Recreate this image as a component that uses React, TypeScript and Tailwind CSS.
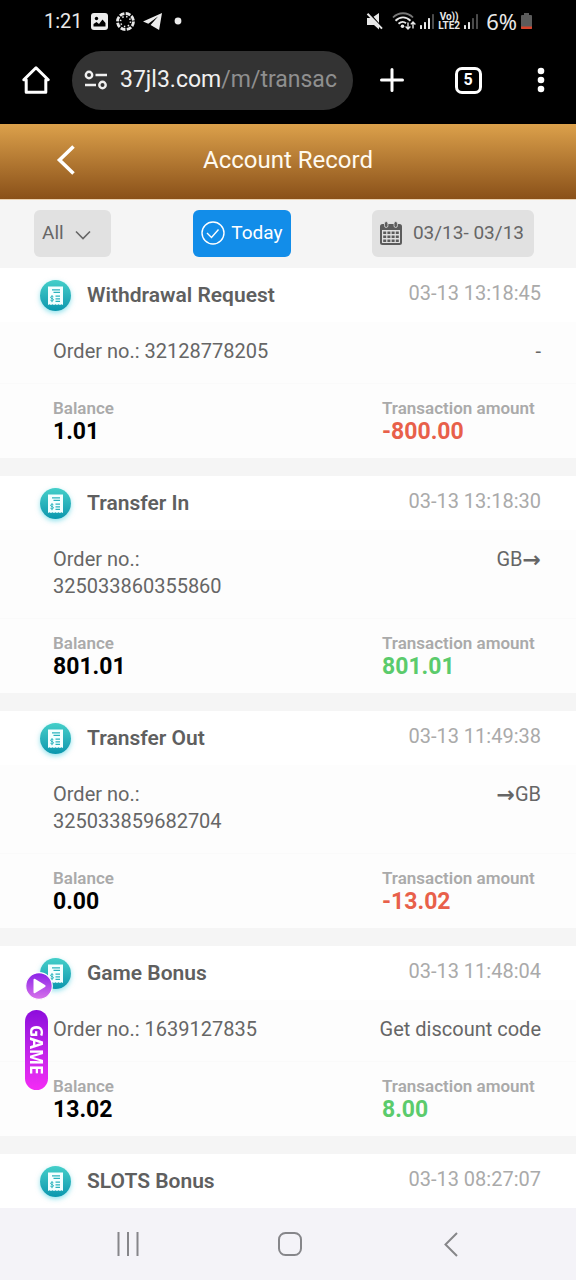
import { useState } from 'react';

interface AccountRecord {
  id: string;
  title: string;
  time: string;
  orderNo: string;
  note: string;
  direction?: 'in' | 'out';
  balance: string;
  amount: string;
}

const records: AccountRecord[] = [
  { id: '1', title: 'Withdrawal Request', time: '03-13 13:18:45', orderNo: '32128778205', note: '-', balance: '1.01', amount: '-800.00' },
  { id: '2', title: 'Transfer In', time: '03-13 13:18:30', orderNo: '325033860355860', note: 'GB', direction: 'in', balance: '801.01', amount: '801.01' },
  { id: '3', title: 'Transfer Out', time: '03-13 11:49:38', orderNo: '325033859682704', note: 'GB', direction: 'out', balance: '0.00', amount: '-13.02' },
  { id: '4', title: 'Game Bonus', time: '03-13 11:48:04', orderNo: '1639127835', note: 'Get discount code', balance: '13.02', amount: '8.00' },
];

const SignalBars = ({ level }: { level: number }) => (
  <svg width="14" height="16" viewBox="0 0 14 16" aria-hidden="true">
    {[4, 7, 11, 15].map((h, i) => (
      <rect key={h} x={i * 4} y={16 - h} width="2" height={h} rx="0.6" fill={i < level ? '#e8e8e8' : '#4a4a4a'} />
    ))}
  </svg>
);

const StatusBar = () => (
  <div className="flex h-[42px] items-center justify-between px-11 text-[#e8e8e8]">
    <div className="flex items-center gap-2">
      <span className="text-xl leading-6">1:21</span>
      <svg width="17" height="17" viewBox="0 0 17 17" aria-hidden="true">
        <rect width="17" height="17" rx="3" fill="#ececec" />
        <circle cx="5.5" cy="5.5" r="1.7" fill="#000" />
        <path d="M2.5 13.5V11l3-2 2.5 2 3.5-4.5 3 3.5v3.5z" fill="#000" />
      </svg>
      <svg width="19" height="19" viewBox="0 0 19 19" fill="none" stroke="#e8e8e8" aria-hidden="true">
        <circle cx="9.5" cy="9.5" r="8" strokeWidth="2.8" strokeDasharray="4.9 1.38" />
        <circle cx="9.5" cy="9.5" r="5" strokeWidth="1.6" strokeDasharray="1.4 2.53" />
      </svg>
      <svg width="19" height="17" viewBox="0 0 19 17" aria-hidden="true">
        <path d="M19 0 0 8.6l5.3 2.2L15 3.6 7.6 11.9l8.5 5z" fill="#ececec" />
      </svg>
      <svg className="ml-1" width="8" height="8" viewBox="0 0 8 8" aria-hidden="true">
        <circle cx="4" cy="4" r="3.4" fill="#ececec" />
      </svg>
    </div>
    <div className="flex items-center gap-1">
      <svg width="18" height="17" viewBox="0 0 18 17" aria-hidden="true">
        <path d="M1 5h5l7 7v4.500l-5-4.500H1zM7.500 3.800 13 0v10z" fill="#e8e8e8" />
        <path d="M1.5 0.8 16 15.6" stroke="#e8e8e8" strokeWidth="2" />
      </svg>
      <svg className="ml-1" width="24" height="18" viewBox="0 0 24 18" fill="none" aria-hidden="true">
        <path d="M1 5.5c5.5-5.7 14.5-5.7 20 0" stroke="#777" strokeWidth="1.8" />
        <path d="M3.5 8.7c4.5-4.4 10.5-4.4 15 0M6.5 11.8c2.8-2.5 5.2-2.5 7.5-.6" stroke="#e8e8e8" strokeWidth="1.9" />
        <circle cx="10.5" cy="14.2" r="1.8" fill="#e8e8e8" />
        <path d="M16 10.5V17M13.6 14.6 16 17l2.4-2.4M21 16.5V10M18.8 12.4 21 10l2.4 2.4" stroke="#e8e8e8" strokeWidth="1.4" />
      </svg>
      <SignalBars level={3} />
      <span className="flex w-[22px] flex-col items-center text-[10px] font-bold leading-[9px]">
        <span>Vo))</span>
        <span>LTE2</span>
      </span>
      <SignalBars level={2} />
      <span className="ml-1 font-['Noto_Sans'] text-[22px] leading-6">6%</span>
      <svg width="11" height="16" viewBox="0 0 11 16" aria-hidden="true">
        <path d="M3 0h5v2h2q1 0 1 1v12q0 1-1 1H1q-1 0-1-1V3q0-1 1-1h2z" fill="#5b5b5b" />
        <path d="M0 13.5h11V15q0 1-1 1H1q-1 0-1-1z" fill="#d8432b" />
      </svg>
    </div>
  </div>
);

const BrowserBar = () => (
  <div className="flex h-[76px] items-center">
    <button aria-label="Home" className="flex w-[72px] justify-center">
      <svg width="28" height="28" viewBox="0 0 28 28" fill="none" stroke="#fff" strokeWidth="3" strokeLinejoin="round" strokeLinecap="round">
        <path d="M1.8 13.8 14 1.8l12.2 12H23.8V26.3H4.2V13.8z" />
      </svg>
    </button>
    <button className="flex h-[59px] min-w-0 flex-1 items-center gap-3 rounded-full bg-[#333] px-3 text-left">
      <svg className="shrink-0" width="24" height="20" viewBox="0 0 24 20" fill="none" stroke="#f0f0f0" strokeWidth="2.4" aria-hidden="true">
        <circle cx="5" cy="5" r="3.2" />
        <path d="M11.5 5H23M1 15h11" />
        <circle cx="18.5" cy="15" r="3.2" />
      </svg>
      <span className="whitespace-nowrap text-[23px] leading-8 text-[#8f8f8f]">
        <span className="text-[#f0f0f0]">37jl3.com</span>/m/transac
      </span>
    </button>
    <button aria-label="New tab" className="flex w-[78px] justify-center">
      <svg width="24" height="24" viewBox="0 0 24 24" stroke="#fff" strokeWidth="3" strokeLinecap="round">
        <path d="M12 1.5v21M1.5 12h21" />
      </svg>
    </button>
    <button aria-label="Tabs" className="flex w-[74px] justify-center">
      <span className="flex h-[27px] w-[27px] items-center justify-center rounded-[7px] border-[3px] border-white text-base font-bold leading-none text-white">
        5
      </span>
    </button>
    <button aria-label="Menu" className="flex w-[71px] justify-center">
      <svg width="8" height="26" viewBox="0 0 8 26" fill="#fff">
        <circle cx="4" cy="4" r="3.3" />
        <circle cx="4" cy="13" r="3.3" />
        <circle cx="4" cy="22" r="3.3" />
      </svg>
    </button>
  </div>
);

const ReceiptIcon = () => (
  <span className="h-[31px] w-[31px] shrink-0 rounded-full bg-gradient-to-b from-[#43cfc9] to-[#0797ae] shadow-[0_2px_5px_rgba(40,200,220,0.5)]">
    <svg width="31" height="31" viewBox="0 0 31 31" fill="none" aria-hidden="true">
      <path d="M8 6.5h15v18.5l-1.5-.7-1.5.7-1.5-.7-1.5.7-1.5-.7-1.5.7-1.5-.7-1.5.7-1.5-.7L8 25z" fill="#f4ffff" />
      <path d="M12 9.8h8M13.5 12.4H20M15.5 16.2H20M15.5 18.8H20M15.5 21.4H20" stroke="#2ab3bd" strokeWidth="1.2" />
      <path d="M13.4 16.8c-1-.9-2.9-.5-2.8.7.1 1.3 2.9.8 2.9 2.2 0 1.2-2.1 1.5-3.1.5M12 15.2v7" stroke="#2ab3bd" strokeWidth="1" />
    </svg>
  </span>
);

const Arrow = () => <span className="font-['DejaVu_Sans'] text-[22px] font-bold">→</span>;

const RecordHeader = ({ title, time }: { title: string; time: string }) => (
  <div className="flex h-[54px] items-center bg-white pl-10 pr-[35px]">
    <ReceiptIcon />
    <h2 className="ml-4 flex-1 text-[21px] font-semibold leading-7 text-[#5f5f5f]">{title}</h2>
    <time className="pb-1 text-xl text-[#aaa]">{time}</time>
  </div>
);

const RecordCard = ({ record }: { record: AccountRecord }) => (
  <article className="mb-[18px] bg-[#fdfdfd]">
    <RecordHeader title={record.title} time={record.time} />
    <div className="flex justify-between border-b border-[#fafafa] pb-[18px] pl-[53px] pr-[35px] pt-4 text-xl leading-[27px] text-[#666]">
      <p className="w-1/2">Order no.: {record.orderNo}</p>
      <p className="flex h-[27px] items-center">
        {record.direction === 'out' && <Arrow />}
        {record.note}
        {record.direction === 'in' && <Arrow />}
      </p>
    </div>
    <dl className="flex h-[74px] justify-between pl-[53px] pr-[35px] pt-[13px]">
      <div>
        <dt className="text-[17px] font-semibold leading-[22px] text-[#aaa]">Balance</dt>
        <dd className="text-[23px] font-bold leading-[26px] text-black">{record.balance}</dd>
      </div>
      <div className="w-[159px]">
        <dt className="whitespace-nowrap text-[17px] font-semibold leading-[22px] text-[#aaa]">Transaction amount</dt>
        <dd className={`text-[23px] font-bold leading-[26px] ${record.amount.startsWith('-') ? 'text-[#e8604a]' : 'text-[#5bcb6c]'}`}>
          {record.amount}
        </dd>
      </div>
    </dl>
  </article>
);

export default function App() {
  const [type, setType] = useState('All');

  return (
    <div className="flex min-h-screen flex-col bg-[#f5f5f5] font-['Roboto','Liberation_Sans',sans-serif]">
      <div className="bg-black pb-[6px]">
        <StatusBar />
        <BrowserBar />
      </div>

      <header className="grid h-[75px] grid-cols-[132px_1fr_132px] items-center bg-gradient-to-b from-[#dca14b] to-[#8a5119] pb-1">
        <button aria-label="Back" className="flex justify-center">
          <svg width="20" height="30" viewBox="0 0 20 30" fill="none" stroke="#fff" strokeWidth="3.6">
            <path d="M17.5 1.5 3.5 15l14 13.5" />
          </svg>
        </button>
        <h1 className="text-center text-2xl leading-8 text-[#fffaf0]">Account Record</h1>
      </header>

      {/* Filters */}
      <div className="flex h-[69px] items-center justify-between border-t border-[#ecd3b2] pb-0.5 pl-[34px] pr-[42px] text-[19px] text-[#666]">
        <div className="relative">
          <select
            aria-label="Record type"
            value={type}
            onChange={(e) => setType(e.target.value)}
            className="h-[47px] w-[77px] appearance-none rounded-md bg-[#e1e1e1] pl-2"
          >
            <option>All</option>
            <option>Transfer</option>
            <option>Bonus</option>
          </select>
          <svg className="pointer-events-none absolute right-5 top-5" width="16" height="10" viewBox="0 0 16 10" fill="none" stroke="#666" strokeWidth="1.6">
            <path d="M1 1.5 8 8.5l7-7" />
          </svg>
        </div>
        <button className="flex h-[47px] w-[98px] items-center justify-between rounded-md bg-[#128de9] px-2 text-white">
          <svg width="24" height="24" viewBox="0 0 24 24" fill="none" stroke="#fff" strokeWidth="1.4" aria-hidden="true">
            <circle cx="12" cy="12" r="11" />
            <path d="M6 12l4.5 4.5L17.5 8.5" />
          </svg>
          Today
        </button>
        <button className="flex h-[47px] w-[162px] items-center justify-between whitespace-nowrap rounded-md bg-[#e1e1e1] pl-2 pr-[10px]">
          <svg width="22" height="24" viewBox="0 0 22 24" aria-hidden="true">
            <path d="M2.5 3h17Q22 3 22 5.5v16q0 2.5-2.5 2.5h-17Q0 24 0 21.5v-16Q0 3 2.5 3zM2 9v12.5q0 .5.5.5h17q.5 0 .5-.5V9z" fill="#5c5c5c" fillRule="evenodd" />
            <rect x="4.5" y="0.5" width="3.4" height="6" rx="1.7" fill="#5c5c5c" stroke="#e1e1e1" strokeWidth="0.8" />
            <rect x="14" y="0.5" width="3.4" height="6" rx="1.7" fill="#5c5c5c" stroke="#e1e1e1" strokeWidth="0.8" />
            {[10.5, 14.5, 18.5].map((y) =>
              [3.2, 7.4, 11.6, 15.8].map((x) => <rect key={`${x}-${y}`} x={x} y={y} width="3" height="2.5" fill="#5c5c5c" />)
            )}
          </svg>
          03/13- 03/13
        </button>
      </div>

      <main className="flex-1">
        {records.map((record) => (
          <RecordCard key={record.id} record={record} />
        ))}
        <RecordHeader title="SLOTS Bonus" time="03-13 08:27:07" />
      </main>

      {/* Floating game shortcut */}
      <button className="fixed bottom-[190px] left-[25px] flex flex-col items-start gap-[10px]">
        <svg width="28" height="28" viewBox="0 0 28 28" aria-hidden="true">
          <defs>
            <linearGradient id="play" x1="0" y1="0" x2="0" y2="1">
              <stop offset="0" stopColor="#8a22e8" />
              <stop offset="1" stopColor="#d873ea" />
            </linearGradient>
          </defs>
          <circle cx="14" cy="14" r="13.3" fill="url(#play)" stroke="#fff" strokeWidth="1.2" />
          <path d="M8.5 8v12q0 1.900 1.700 1.100l9.800-6q1.500-1.100 0-2.200L10.200 6.900Q8.500 6.100 8.500 8z" fill="#fff" />
        </svg>
        <span className="flex h-20 w-[23px] items-center justify-center rounded-full bg-gradient-to-b from-[#8d0bdc] to-[#f42bf5] font-['Noto_Sans'] text-[17px] font-bold leading-none text-white [writing-mode:vertical-rl]">
          GAME
        </span>
      </button>

      <nav className="flex h-[72px] items-center bg-[#f4f3f8] pl-[47px] pr-11">
        <button aria-label="Recent apps" className="flex flex-1 justify-center">
          <svg width="22" height="24" viewBox="0 0 22 24" stroke="#86868a" strokeWidth="2">
            <path d="M1.5 0v24M11 0v24M20.5 0v24" />
          </svg>
        </button>
        <button aria-label="Home screen" className="flex flex-1 justify-center">
          <svg width="24" height="24" viewBox="0 0 24 24" fill="none" stroke="#86868a" strokeWidth="2">
            <rect x="1" y="1" width="22" height="22" rx="6.5" />
          </svg>
        </button>
        <button aria-label="Go back" className="flex flex-1 justify-center">
          <svg width="14" height="25" viewBox="0 0 14 25" fill="none" stroke="#86868a" strokeWidth="2">
            <path d="M13 1 1.5 12.5 13 24" />
          </svg>
        </button>
      </nav>
    </div>
  );
}
